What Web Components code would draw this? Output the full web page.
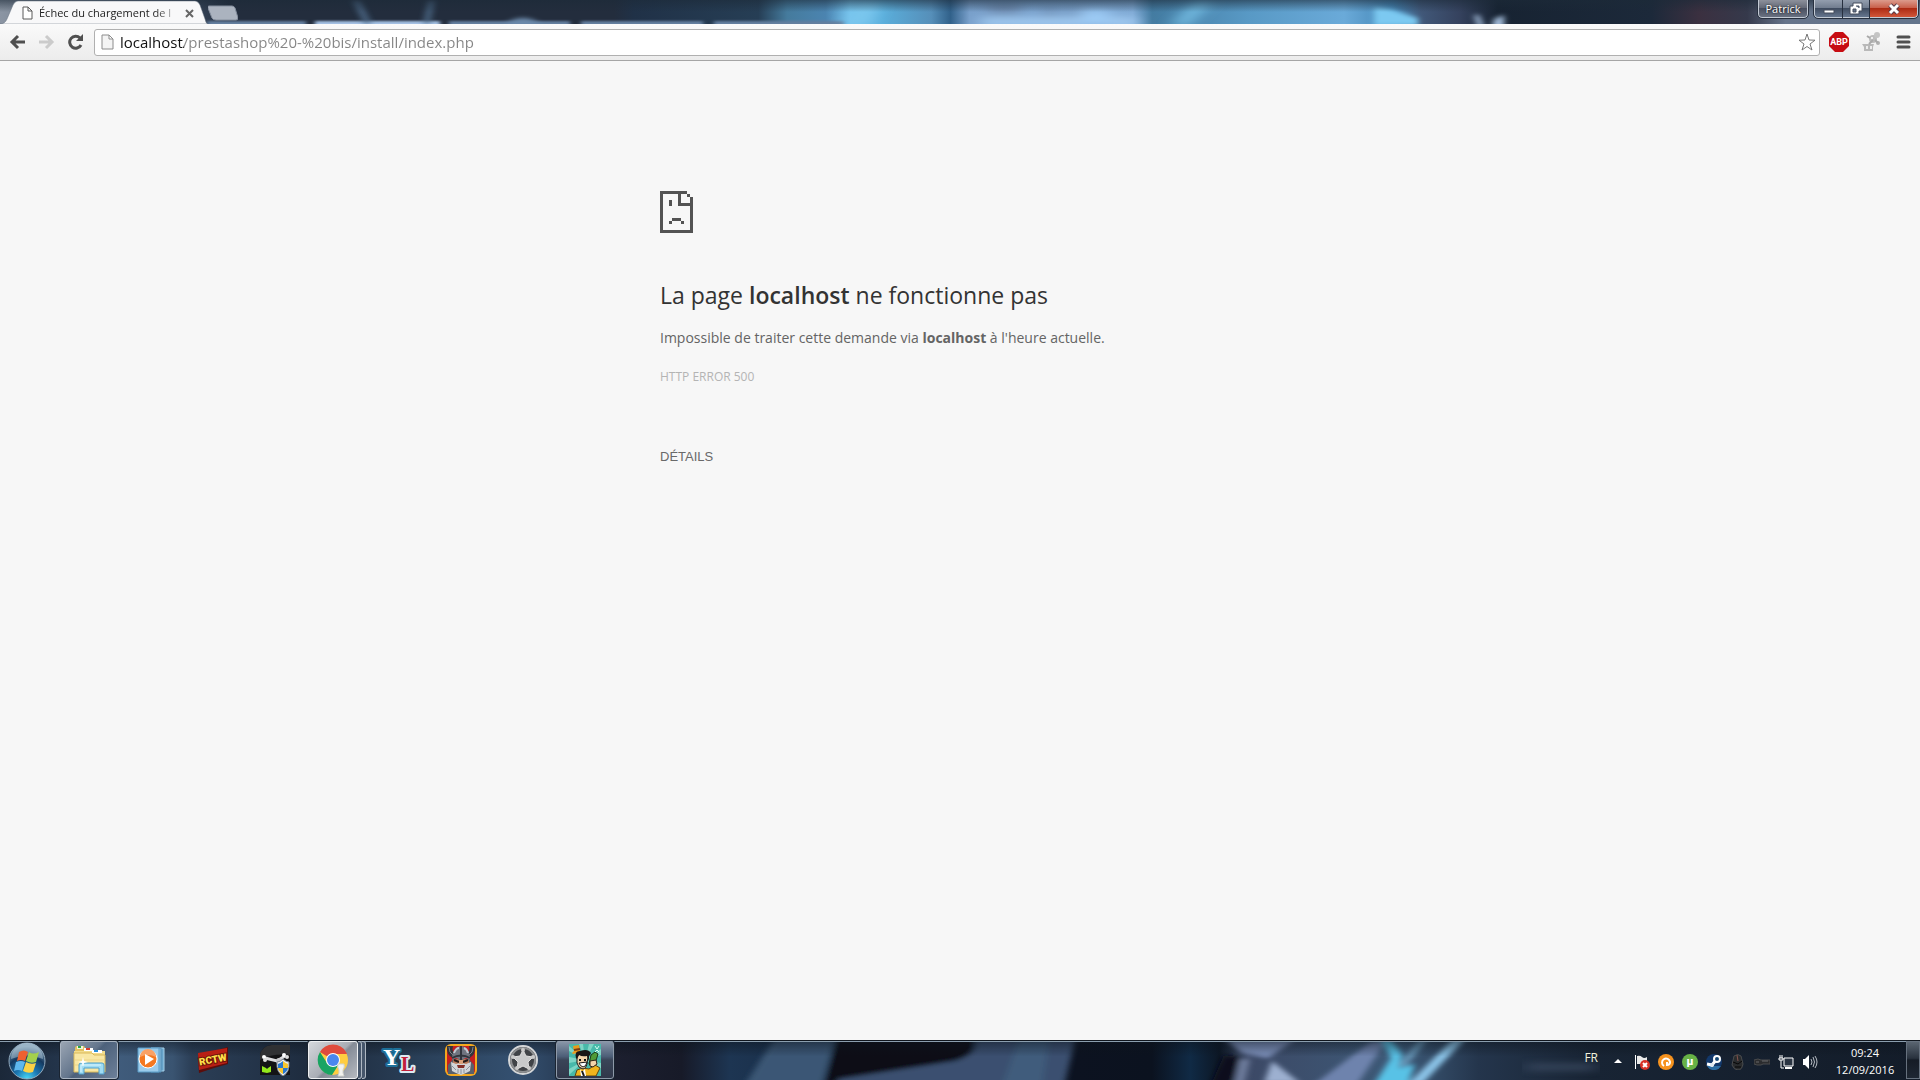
<!DOCTYPE html>
<html lang="fr">
<head>
<meta charset="utf-8">
<title>Échec du chargement de la page</title>
<style>
  html, body {
    height: 100%;
    margin: 0;
  }
  body {
    display: flex;
    flex-direction: column;
    overflow: hidden;
    background: #f7f7f7;
    font-family: "Open Sans", "Noto Sans", sans-serif;
  }
  error-page {
    flex: 1;
  }
  error-page [slot=title] b {
    font-weight: 600;
  }
</style>
</head>
<body>
  <title-bar>
    <browser-tab>Échec du chargement de l</browser-tab>
    <window-controls slot="controls" user="Patrick"></window-controls>
  </title-bar>
  <tool-bar url="localhost/prestashop%20-%20bis/install/index.php"></tool-bar>

  <error-page code="HTTP ERROR 500">
    <span slot="title">La page <b>localhost</b> ne fonctionne pas</span>
    <span slot="summary">Impossible de traiter cette demande via <b>localhost</b> à l'heure actuelle.</span>
  </error-page>

  <task-bar>
    <task-button label="Explorateur Windows" state="open">
      <svg width="34" height="32" viewBox="0 0 34 32">
        <path d="M3 4l1-2h8l1 2h8v3h9v20H3z" fill="#e3c263"/>
        <path d="M5 2h6v3H5z" fill="#f4f4dc"/><path d="M6 2h3v2H6z" fill="#28a745"/>
        <path d="M2 7h31v20H2z" fill="#f2dc8c"/>
        <path d="M12 4h9v3h-9z" fill="#fff"/><path d="M14 4h4v2h-4z" fill="#d83c2e"/>
        <path d="M20 6h10v3H20z" fill="#fff"/><path d="M22 6h4v2h-4z" fill="#2a8fd8"/>
        <path d="M2 9h18l2 2h11v17H2z" fill="#f8e7a4" stroke="#d9b95b"/>
        <path d="M3 16h30M3 21h30" stroke="#edd587"/>
        <path d="M7 30V21q0-2 2-2h21q2 0 2 2v9h-5v-6H12v6z" fill="#9fdcf3" stroke="#4f9fcb"/>
        <path d="M9 28v-7h20" fill="none" stroke="#dcf6ff"/>
        <path d="M11 13l1 4 4 1-4 1-1 4-1-4-4-1 4-1z" fill="#fff"/>
      </svg>
    </task-button>
    <task-button label="Lecteur Windows Media">
      <svg width="28" height="28" viewBox="0 0 28 28">
        <path d="M14 2h13v23H14z" fill="#66a2c9" stroke="#a6d0e8"/>
        <path d="M14 2h10v24H14z" fill="#8cbdde" stroke="#5790b8"/>
        <path d="M1 2h21v24H1z" fill="#9bcbea" stroke="#589bc6"/>
        <circle cx="11" cy="13" r="9" fill="#f47820" stroke="#fff"/>
        <path d="M3 11a8 8 0 0 1 16 0q-8-4-16 0z" fill="#f9a165"/>
        <path d="M8 8v11l9-6z" fill="#fff"/>
      </svg>
    </task-button>
    <task-button label="RollerCoaster Tycoon World">
      <svg width="36" height="34" viewBox="-2 -3 36 34">
        <path d="M1 9L16 5 31 1v17l-14 4-15 5z" fill="#5c0d0b"/>
        <path d="M1 7L30 2v15L2 24z" fill="#b81f14"/>
        <text x="16" y="17" fill="#ffe04a" stroke="#6d140a" stroke-width="2" paint-order="stroke" text-anchor="middle" transform="rotate(-11 16 14)" font-family="Roboto" font-size="10" font-weight="900">RCTW</text>
      </svg>
    </task-button>
    <task-button label="Utilitaire">
      <svg width="32" height="32" viewBox="0 0 32 32">
        <path d="M1 31V12Q2 2 13 1h18v30z" fill="#131315"/>
        <path d="M1 16V12Q2 2 13 1h18v10Q14 9 1 16z" fill="#303133"/>
        <path d="M6 14l12 3 8-5" fill="none" stroke="#dcdcde" stroke-width="3"/>
        <circle cx="5" cy="13" r="2" fill="#fff"/><circle cx="6" cy="16" r="2" fill="#ddd"/>
        <circle cx="20" cy="17" r="3" fill="#c9c9cc"/>
        <circle cx="25" cy="11" r="2" fill="#fff"/><circle cx="28" cy="13" r="2" fill="#ddd"/>
        <path d="M3 22l4 2 1 1 1-1 3-2v6l-4 1-5-1z" fill="#92e81c"/>
        <path d="M24 15q3 3 6 3 1 10-6 14-7-4-6-14 3 0 6-3z" fill="#e9edf2" stroke="#7c8590"/>
        <path d="M24 17v7h-5q0-3 0-4 3-1 5-3zM24 24h5q-1 4-5 6z" fill="#2877ce"/>
        <path d="M24 17q2 2 5 3v4h-5zM19 24h5v6q-4-2-5-6z" fill="#f8c62d"/>
      </svg>
    </task-button>
    <task-button label="Google Chrome" state="active">
      <svg width="32" height="34" viewBox="0 0 32 34">
        <circle cx="16" cy="17" r="15" fill="#ffcd40"/>
        <path d="M16 17L3 9A15 15 0 0 1 29 9l1 2H16z" fill="#df4b3d"/>
        <path d="M3 9a15 15 0 0 0 12 23l7-11-6 2-6-3z" fill="#19a463"/>
        <circle cx="16" cy="17" r="7" fill="#fff"/><circle cx="16" cy="17" r="6" fill="#4a87ee"/>
        <path d="M21 21h6q1 3-1 6v3l1 3h-6l1-3v-3q-2-3-1-6z" fill="#f3f3ef" stroke="#d0d2cc"/>
      </svg>
    </task-button>
    <task-button label="YL">
      <svg width="36" height="36" viewBox="0 0 36 36">
        <g font-family="Liberation Serif" font-weight="700" stroke-width="4" paint-order="stroke" stroke-linejoin="round">
          <text x="2" y="23" font-size="24" fill="#fff" stroke="#1d6f98">Y</text>
          <text x="20" y="29" font-size="20" fill="#c2203a" stroke="#dcebf2">L</text>
        </g>
      </svg>
    </task-button>
    <task-button label="Vikings">
      <svg width="34" height="34" viewBox="0 0 34 34">
        <rect x="1" y="1" width="32" height="32" rx="6" fill="#f3a81e"/>
        <rect x="3" y="3" width="28" height="28" rx="4" fill="#c51d20"/>
        <path d="M4 31v-9l5-6h16l5 6v9z" fill="#59606b"/>
        <path d="M3 3q-1 9 6 12l4-3Q7 9 9 3zM31 3q1 9-6 12l-4-3q6-3 4-9z" fill="#33353c"/>
        <path d="M5 4q0 6 4 8M29 4q0 6-4 8" fill="none" stroke="#7d828c"/>
        <path d="M8 17Q8 4 17 3q9 1 9 14l-4-2-5 2-5-2z" fill="#6f747f"/>
        <path d="M17 3v14M8 15q9-5 18 0" fill="none" stroke="#30343c" stroke-width="2"/>
        <path d="M10 10q2-5 5-5M20 5q3 1 4 5" fill="none" stroke="#c2c8d0" stroke-width="2"/>
        <path d="M9 17l5-1 3 2 3-2 5 1v5H9z" fill="#b97c5c"/>
        <path d="M10 17l5 2M24 17l-5 2" stroke="#241a18" stroke-width="2"/>
        <path d="M7 19l5 2 4-1h2l4 1 5-2-1 9-4 2-5 2-5-2-4-2z" fill="#d2d5d9"/>
        <path d="M13 22h8l-1 3h-6z" fill="#832f28"/>
        <path d="M8 23l4 4M26 23l-4 4M14 26v4M17 26v5M20 26v4" stroke="#8d9299"/>
        <path d="M15 17h4v4h-4z" fill="#daa07a"/>
      </svg>
    </task-button>
    <task-button label="Étoile">
      <svg width="32" height="32" viewBox="0 0 32 32">
        <circle cx="16" cy="16" r="14" fill="#404347" stroke="#d4d6d8" stroke-width="2"/>
        <circle cx="16" cy="16" r="12" fill="none" stroke="#8d8f91" stroke-width="2"/>
        <path d="M16 6l3 6 7 1-5 5 1 7-6-3-6 3 1-7-5-5 7-1z" fill="#c8c9ca" stroke="#dedede"/>
        <g fill="#cacaca"><circle cx="16" cy="6" r="2"/><circle cx="26" cy="13" r="2"/><circle cx="22" cy="24" r="2"/><circle cx="10" cy="24" r="2"/><circle cx="6" cy="13" r="2"/></g>
      </svg>
    </task-button>
    <task-button label="AdVenture Capitalist" state="dim">
      <svg width="32" height="32" viewBox="0 0 32 32">
        <path d="M0 0h32v32H0z" fill="#48b9aa"/>
        <path d="M16 16L0 2v5zM16 16L10 0h4zM16 16L20 0h5zM16 16L32 5v6zM16 16l16 3v6zM16 16L0 13v6zM16 16L0 25v6z" fill="#7ed5c5"/>
        <path d="M4 2l6-1 1 6 2 1-9 2-1-1 2-2z" fill="#e89b1c"/><path d="M5 6l6-1" stroke="#7b3c12" stroke-width="2"/>
        <path d="M6 32l2-6 6-2 6 1 6-4 5 3-4 8z" fill="#f0b41d" stroke="#5f4310"/>
        <path d="M8 12q5-5 11 0l-1 8q-1 5-4 5-5-1-6-6z" fill="#f3d4ab" stroke="#1c1b1b"/>
        <path d="M7 14Q5 7 11 7q8-3 11 2-1 3-2 3v5l-2-5q-5 1-8-1l-2 4z" fill="#191717"/>
        <path d="M10 19l8-1q-1 5-4 5-3-1-4-4z" fill="#fff" stroke="#151515"/>
        <path d="M11 25l2 3 3-3 1 7h-5z" fill="#fff"/><path d="M13 27l2 5" stroke="#1a1a1a" stroke-width="2"/>
        <path d="M11 15v2M16 15v2" stroke="#111" stroke-width="2"/>
        <path d="M22 11l4-3 3 2-3 10-4 2-2-2z" fill="#4f9b37" stroke="#173819"/>
        <path d="M21 17l6-1 1 4-4 3-3-1z" fill="#f3d4ab" stroke="#312117"/>
        <path d="M26 2l2 3 2-3M26 8l2-2 2 2" stroke="#d6fff3" fill="none"/>
      </svg>
    </task-button>
    <system-tray slot="tray" lang="FR" time="09:24" date="12/09/2016"></system-tray>
  </task-bar>

<script>
class TitleBar extends HTMLElement {
  constructor() {
    super()
    this.attachShadow({ mode: 'open' })
    this.shadowRoot.innerHTML = `
      <style>
        :host {
          display: flex;
          position: relative;
          justify-content: space-between;
          align-items: flex-start;
          height: 24px;
          overflow: hidden;
          background: #232f40;
        }
        .glass {
          position: absolute;
          inset: 0;
          width: 100%;
          height: 100%;
        }
        .tabs {
          display: flex;
          position: relative;
        }
        .new {
          width: 30px;
          height: 24px;
          padding: 0;
          border: 0;
          background: none;
        }
        .new svg {
          display: block;
        }
        ::slotted([slot=controls]) {
          position: relative;
        }
      </style>
      <svg class="glass" viewBox="0 0 1920 24" preserveAspectRatio="none" aria-hidden="true">
        <defs>
          <filter id="soft" x="-10%" y="-80%" width="120%" height="260%"><feGaussianBlur stdDeviation="8 4"/></filter>
          <filter id="fine" x="-10%" y="-50%" width="120%" height="200%"><feGaussianBlur stdDeviation="2 1"/></filter>
          <filter id="glow" x="-10%" y="-50%" width="120%" height="200%"><feGaussianBlur stdDeviation="3 2"/></filter>
          <linearGradient id="sky">
            <stop offset="0" stop-color="#8b95a3"/><stop offset=".1" stop-color="#38475b"/>
            <stop offset=".12" stop-color="#232d3d"/><stop offset=".32" stop-color="#232d3d"/>
            <stop offset=".33" stop-color="#203147"/><stop offset=".395" stop-color="#263e55"/>
            <stop offset=".41" stop-color="#457b9d"/><stop offset=".43" stop-color="#4b84b0"/>
            <stop offset=".443" stop-color="#72c0eb"/><stop offset=".46" stop-color="#5aaedb"/>
            <stop offset=".485" stop-color="#568fb9"/><stop offset=".495" stop-color="#31618a"/>
            <stop offset=".505" stop-color="#789fca"/><stop offset=".59" stop-color="#7fa9d4"/>
            <stop offset=".6" stop-color="#437ba1"/><stop offset=".65" stop-color="#5899c5"/>
            <stop offset=".7" stop-color="#6aaad9"/><stop offset=".725" stop-color="#4486b6"/>
            <stop offset=".74" stop-color="#415879"/><stop offset=".76" stop-color="#35425e"/>
            <stop offset=".78" stop-color="#172332"/><stop offset=".86" stop-color="#1c293a"/>
            <stop offset=".885" stop-color="#3b3040"/><stop offset=".91" stop-color="#35394b"/>
            <stop offset=".93" stop-color="#67758b"/><stop offset="1" stop-color="#64758c"/>
          </linearGradient>
          <linearGradient id="edge" x2="0" y2="1">
            <stop offset="0" stop-color="#1c2a38" stop-opacity=".6"/><stop offset=".5" stop-color="#1c2a38" stop-opacity="0"/>
          </linearGradient>
        </defs>
        <path d="M0 0h1920v24H0z" fill="url(#sky)"/>
        <g filter="url(#fine)">
          <path d="M207 21h99v5h-99zM449 21h121v5H449zM581 21h122v5H581zM714 21h130v5H714z" fill="#647e9e"/>
          <path d="M315 21h125v5H315z" fill="#a3bfe2"/>
        </g>
        <g filter="url(#glow)">
          <path d="M352 0h8l12 24h-8zM428 0h7l-5 24h-7z" fill="#4d6a89" opacity=".8"/>
          <path d="M505 24q18-12 36 0z" fill="#6f8fb1"/>
          <path d="M1374 7l16 2 28 9v8h-44z" fill="#7cc9f1"/>
          <path d="M1474 15h5l5 12h-6zM1494 19l10-4v13h-12z" fill="#a4bddb"/>
        </g>
        <g filter="url(#soft)">
          <path d="M856 0h26l-12 26h-26zM1196 0h18l-26 26h-18z" fill="#7ecaf0" opacity=".8"/>
          <path d="M980 18h158v8H980z" fill="#a8d2f8"/>
          <path d="M988 4h32v10h-32zM1044 8h12v8h-12zM1070 8h12v8h-12z" fill="#6a86aa"/>
          <path d="M1080 10h30v14h-30z" fill="#9ccbf5"/>
        </g>
        <path d="M0 0h1920v24H0z" fill="url(#edge)"/>
      </svg>
      <div class="tabs">
        <slot></slot>
        <button class="new" aria-label="Nouvel onglet">
          <svg width="30" height="24" viewBox="0 0 30 24">
            <path d="M1 6h23q2 0 3 2l3 10q0 2-2 2H8q-3 0-4-2L0 8q-1-2 1-2z" fill="#abb3bf" stroke="#848e9d"/>
          </svg>
        </button>
      </div>
      <slot name="controls"></slot>
    `
  }
}

class BrowserTab extends HTMLElement {
  constructor() {
    super()
    this.attachShadow({ mode: 'open' })
    this.shadowRoot.innerHTML = `
      <style>
        :host {
          display: flex;
          position: relative;
          box-sizing: border-box;
          align-items: center;
          width: 208px;
          height: 24px;
          padding: 2px 12px 0 22px;
          color: #222;
          font-size: 11px;
          line-height: 20px;
        }
        .shape {
          position: absolute;
          inset: 0;
        }
        .icon {
          position: relative;
          flex: none;
          margin-right: 6px;
        }
        .title {
          position: relative;
          flex: 1;
          overflow: hidden;
          white-space: nowrap;
          -webkit-mask-image: linear-gradient(90deg, #000 116px, transparent 142px);
          mask-image: linear-gradient(90deg, #000 116px, transparent 142px);
        }
        button {
          position: relative;
          display: flex;
          align-items: center;
          padding: 2px;
          border: 0;
          background: none;
        }
      </style>
      <svg class="shape" width="208" height="24" viewBox="0 0 208 24" aria-hidden="true">
        <path d="M0 24q5 0 7-5l6-14q2-4 5-4h177q3 0 5 4l5 14q1 5 3 5z" fill="#f8f8f9" stroke="#66717f" stroke-opacity=".5"/>
      </svg>
      <svg class="icon" width="11" height="14" viewBox="0 0 11 14" aria-hidden="true">
        <path d="M1 1h5l4 4v8H1zM6 1v4h4" fill="#fff" stroke="#5b5b5b"/>
      </svg>
      <span class="title"><slot></slot></span>
      <button aria-label="Fermer l'onglet">
        <svg width="9" height="9" viewBox="0 0 9 9"><path d="M1 1l7 7M8 1L1 8" stroke="#666" stroke-width="2"/></svg>
      </button>
    `
  }
}

class WindowControls extends HTMLElement {
  constructor() {
    super()
    this.attachShadow({ mode: 'open' })
    this.shadowRoot.innerHTML = `
      <style>
        :host {
          display: flex;
          gap: 6px;
          padding-right: 2px;
        }
        button {
          display: flex;
          box-sizing: border-box;
          justify-content: center;
          align-items: center;
          height: 18px;
          padding: 0;
          border: 1px solid #c3cad4;
          border-top: 0;
          outline: 1px solid #27303f;
          background: linear-gradient(#939eae, #727e90 45%, #3f4c60 50%, #66768e);
          color: #fff;
          font: 11px/16px "Open Sans", sans-serif;
        }
        .user {
          width: 50px;
          border-radius: 0 0 4px 4px;
          background: linear-gradient(#8c909b, #666b78 45%, #4a5060 50%, #697181);
          text-shadow: 0 0 2px #000;
        }
        .group {
          display: flex;
        }
        .min {
          width: 29px;
          border-radius: 0 0 0 4px;
        }
        .max {
          width: 27px;
          border-left: 0;
        }
        .close {
          width: 48px;
          border-left: 0;
          border-radius: 0 0 4px 0;
          background: linear-gradient(#dc9b8d, #c9604c 45%, #ad2b14 50%, #d1563a);
        }
      </style>
      <button class="user"></button>
      <div class="group">
        <button class="min" aria-label="Réduire">
          <svg width="12" height="14" viewBox="0 0 12 14"><path d="M1 8h10v3H1z" fill="#fff" stroke="#444c5c"/></svg>
        </button>
        <button class="max" aria-label="Restaurer">
          <svg width="14" height="14" viewBox="0 0 14 14">
            <path d="M4 1h9v8h-3v3H1V4h3z" fill="#fff" stroke="#444c5c"/><path d="M4 7h3v3H4zM7 4h3v2" fill="#66758b" stroke="#444c5c"/>
          </svg>
        </button>
        <button class="close" aria-label="Fermer">
          <svg width="14" height="14" viewBox="0 0 14 14">
            <path d="M3 3l8 8M11 3l-8 8" stroke="#5a3c48" stroke-width="5"/><path d="M3 3l8 8M11 3l-8 8" stroke="#fff" stroke-width="3"/>
          </svg>
        </button>
      </div>
    `
  }

  connectedCallback() {
    this.shadowRoot.querySelector('.user').textContent = this.getAttribute('user')
  }
}

class ToolBar extends HTMLElement {
  constructor() {
    super()
    this.attachShadow({ mode: 'open' })
    this.shadowRoot.innerHTML = `
      <style>
        :host {
          display: flex;
          box-sizing: border-box;
          align-items: center;
          height: 37px;
          padding: 0 7px 0 3px;
          border-bottom: 1px solid #a5a5a5;
          background: linear-gradient(#fafafa, #ececec);
        }
        button {
          display: flex;
          flex: none;
          justify-content: center;
          align-items: center;
          padding: 0;
          border: 0;
          background: none;
        }
        .nav {
          width: 29px;
          height: 28px;
        }
        .box {
          display: flex;
          flex: 1;
          box-sizing: border-box;
          align-items: center;
          gap: 6px;
          height: 27px;
          margin-left: 4px;
          padding: 0 3px 0 6px;
          border: 1px solid #b0b0b0;
          border-radius: 3px;
          background: #fff;
        }
        input {
          flex: 1;
          min-width: 0;
          height: 24px;
          padding: 0;
          border: 0;
          outline: 0;
          background: linear-gradient(90deg, #111 64px, #858585 64px);
          -webkit-background-clip: text;
          background-clip: text;
          -webkit-text-fill-color: transparent;
          font: 15px/24px "Open Sans", sans-serif;
        }
        .extensions {
          display: flex;
          gap: 12px;
          align-items: center;
          padding-left: 9px;
        }
      </style>
      <button class="nav" aria-label="Précédent">
        <svg width="17" height="16" viewBox="0 0 17 16"><path d="M9 2L3 8l6 6M3 8h13" fill="none" stroke="#4f4f4f" stroke-width="3"/></svg>
      </button>
      <button class="nav" aria-label="Suivant">
        <svg width="17" height="16" viewBox="0 0 17 16"><path d="M8 2l6 6-6 6M14 8H1" fill="none" stroke="#cbcbcb" stroke-width="3"/></svg>
      </button>
      <button class="nav" aria-label="Actualiser">
        <svg width="16" height="16" viewBox="0 0 16 16">
          <path d="M13 11a6 6 0 1 1-1-7" fill="none" stroke="#505050" stroke-width="3"/><path d="M15 0v7H8z" fill="#505050"/>
        </svg>
      </button>
      <div class="box">
        <svg width="13" height="16" viewBox="0 0 13 16" aria-hidden="true">
          <path d="M1 1h7l4 4v10H1zM8 1v4h4" fill="#f4f4f4" stroke="#8c8c8c"/>
        </svg>
        <input type="text" aria-label="Adresse" spellcheck="false">
        <button aria-label="Ajouter aux favoris">
          <svg width="18" height="18" viewBox="0 0 18 18">
            <path d="M9 1l2 6 6 .2-5 3.800 2 6L9 13.500 4 17l2-6L1 7.200 7 7z" fill="#fff" stroke="#777" stroke-linejoin="round"/>
          </svg>
        </button>
      </div>
      <div class="extensions">
        <button aria-label="Adblock Plus">
          <svg width="20" height="20" viewBox="0 0 20 20">
            <path d="M6 0h8l6 6v8l-6 6H6l-6-6V6z" fill="#c70d12"/>
            <text x="10" y="13" fill="#fff" text-anchor="middle" font-family="Roboto" font-size="9" font-weight="700">ABP</text>
          </svg>
        </button>
        <button aria-label="Extension">
          <svg width="20" height="20" viewBox="0 0 20 20">
            <path d="M1 12h12l-1 3v4H3v-4z" fill="#b9b9b9"/><path d="M5 14h2v3H5zM9 14h2v3H9z" fill="#eee"/>
            <circle cx="12" cy="7" r="4" fill="#bdbdbd"/><circle cx="16" cy="3" r="3" fill="#c4c4c4"/><circle cx="17" cy="11" r="2" fill="#b2b2b2"/>
            <path d="M6 4l3 2M8 12l4-4M14 8l3 3" stroke="#aaa" stroke-width="2"/><circle cx="11" cy="6" r="1" fill="#fff"/>
          </svg>
        </button>
        <button aria-label="Menu">
          <svg width="20" height="16" viewBox="0 0 20 16"><path d="M5 3h11M5 8h11M5 13h11" stroke="#505050" stroke-width="3" stroke-linecap="round"/></svg>
        </button>
      </div>
    `
  }

  connectedCallback() {
    this.shadowRoot.querySelector('input').value = this.getAttribute('url')
  }
}

class ErrorPage extends HTMLElement {
  constructor() {
    super()
    this.attachShadow({ mode: 'open' })
    this.shadowRoot.innerHTML = `
      <style>
        :host {
          display: block;
          background: #f7f7f7;
          color: #646464;
          font-size: 14px;
          line-height: 24px;
        }
        main {
          max-width: 600px;
          margin: 0 auto;
          padding-top: 130px;
        }
        svg {
          display: block;
        }
        h1 {
          margin: 46px 0 15px;
          color: #333;
          font-size: 23px;
          font-weight: 400;
          line-height: 32px;
        }
        p {
          margin: 0;
        }
        .code {
          margin-top: 15px;
          color: #b4b4b4;
          font-size: 12px;
        }
        button {
          margin-top: 56px;
          padding: 0;
          border: 0;
          background: none;
          color: #696969;
          font: 13px/24px "Liberation Sans", sans-serif;
          text-transform: uppercase;
        }
        ::slotted(span) {
          white-space: nowrap;
        }
      </style>
      <main>
        <svg width="33" height="42" viewBox="0 0 11 14" shape-rendering="crispEdges" aria-hidden="true">
          <path fill="#535353" d="M0 0h9v1h1v1H9V1H7v3h3V2h1v12H0zM1 1v12h9V5H6V1zM3 3h1v2H3zM4 9h3v1H4zM3 10h1v1H3zM7 10h1v1H7z" fill-rule="evenodd"/>
        </svg>
        <h1><slot name="title"></slot></h1>
        <p><slot name="summary"></slot></p>
        <p class="code"></p>
        <button>Détails</button>
      </main>
    `
  }

  connectedCallback() {
    this.shadowRoot.querySelector('.code').textContent = this.getAttribute('code')
  }
}

class TaskBar extends HTMLElement {
  constructor() {
    super()
    this.attachShadow({ mode: 'open' })
    this.shadowRoot.innerHTML = `
      <style>
        :host {
          display: flex;
          position: relative;
          box-sizing: border-box;
          height: 40px;
          border-top: 1px solid #10161e;
          background: #1b2636;
        }
        .glass {
          position: absolute;
          inset: 0;
          width: 100%;
          height: 100%;
        }
        .start {
          position: relative;
          width: 60px;
          padding: 0 0 0 8px;
          border: 0;
          background: none;
          text-align: left;
        }
        .start svg {
          display: block;
        }
        .buttons {
          display: flex;
          position: relative;
          flex: 1;
          gap: 4px;
          padding-bottom: 1px;
        }
        ::slotted([slot=tray]) {
          position: relative;
        }
      </style>
      <svg class="glass" viewBox="0 0 1920 39" preserveAspectRatio="none" aria-hidden="true">
        <defs>
          <filter id="blur" x="-5%" y="-20%" width="110%" height="140%"><feGaussianBlur stdDeviation="3 2"/></filter>
          <filter id="haze" x="-5%" y="-80%" width="110%" height="260%"><feGaussianBlur stdDeviation="8 3"/></filter>
          <linearGradient id="base">
            <stop offset="0" stop-color="#1b2839"/><stop offset=".03" stop-color="#23344a"/>
            <stop offset=".06" stop-color="#405c7c"/><stop offset=".09" stop-color="#3a5471"/>
            <stop offset=".1" stop-color="#2b3e56"/><stop offset=".16" stop-color="#1e2c3f"/>
            <stop offset=".19" stop-color="#233449"/><stop offset=".22" stop-color="#2a4059"/>
            <stop offset=".27" stop-color="#345070"/><stop offset=".3" stop-color="#263850"/>
            <stop offset=".32" stop-color="#1c1f2f"/><stop offset=".355" stop-color="#171a28"/>
            <stop offset=".38" stop-color="#1d3552"/><stop offset=".56" stop-color="#0c1220"/>
            <stop offset=".6" stop-color="#0b121f"/><stop offset=".62" stop-color="#102a45"/>
            <stop offset=".635" stop-color="#0c1725"/><stop offset=".65" stop-color="#3c4966"/>
            <stop offset=".73" stop-color="#3d5a78"/><stop offset=".77" stop-color="#24354c"/>
            <stop offset=".83" stop-color="#182434"/><stop offset="1" stop-color="#131c29"/>
          </linearGradient>
          <linearGradient id="shine" x2="0" y2="1">
            <stop offset="0" stop-color="#0d141c" stop-opacity=".5"/><stop offset=".4" stop-color="#0d141c" stop-opacity="0"/>
          </linearGradient>
        </defs>
        <path d="M0 0h1920v39H0z" fill="url(#base)"/>
        <g filter="url(#blur)">
          <path d="M776-5h60l-14 50h-78z" fill="#3b5674"/>
          <path d="M837-5h136v16q-4 6-21 9L835 42l-11 3z" fill="#090d14"/>
          <path d="M975-5h101l-12 50H838v-7l117-18q19-6 20-15z" fill="#3a506f"/>
          <path d="M1020-5h30l-8 50h-40z" fill="#3f5c7b"/>
          <path d="M1222-5h78l-32 22-26-5z" fill="#7d90ba"/>
          <path d="M1272 20l28 22h-36z" fill="#9db0d0"/>
          <path d="M1224 14l16 2-10 30h-20z" fill="#0b111c"/>
          <path d="M1240 18h10l-6 26h-10z" fill="#6e7d9d"/>
          <path d="M1372 0h14l-30 45h-44z" fill="#6e83ad"/>
          <path d="M1380-3h10l12 16-3 14 16-4-8 22h-34l18-28z" fill="#59c2e6"/>
          <path d="M1422-5h8l-24 30h-8z" fill="#7ab3d6" opacity=".7"/>
          <path d="M1456-5h12l-46 48h-14z" fill="#8bc4e8"/>
        </g>
        <path d="M1526 22h70v8h-70z" fill="#415067" opacity=".6" filter="url(#haze)"/>
        <path d="M0 0h1920v39H0z" fill="url(#shine)"/>
        <path d="M0 0h1920v1H0z" fill="#8b9eae"/>
      </svg>
      <button class="start" aria-label="Démarrer">
        <svg width="38" height="38" viewBox="0 0 38 38">
          <defs>
            <radialGradient id="orb" cx=".5" cy="1" r=".9">
              <stop offset="0" stop-color="#4cdcf8"/><stop offset=".35" stop-color="#1b79b4"/><stop offset=".7" stop-color="#15395f"/><stop offset="1" stop-color="#7896ac"/>
            </radialGradient>
          </defs>
          <circle cx="19" cy="19" r="18" fill="url(#orb)" stroke="#92aabd"/>
          <path d="M3 17a16 16 0 0 1 32 0q-16-7-32 0z" fill="#cfe4f0" opacity=".4"/>
          <path d="M11 10q5-3 9 0l-3 9q-4-2-8 0z" fill="#ee6130"/>
          <path d="M21 10q4 3 10 0l-3 10q-5 2-10-1z" fill="#a4d04b"/>
          <path d="M8 20q5-2 9 0l-3 9q-4-2-8 0z" fill="#5eb7ed"/>
          <path d="M18 20q5 3 10 1l-3 9q-5 2-10-1z" fill="#fbd245"/>
        </svg>
      </button>
      <div class="buttons"><slot></slot></div>
      <slot name="tray"></slot>
    `
  }
}

class TaskButton extends HTMLElement {
  constructor() {
    super()
    this.attachShadow({ mode: 'open' })
    this.shadowRoot.innerHTML = `
      <style>
        :host {
          display: flex;
          width: 58px;
        }
        button {
          display: flex;
          flex: 1;
          box-sizing: border-box;
          justify-content: center;
          align-items: center;
          min-width: 0;
          padding: 0;
          border: 1px solid transparent;
          border-radius: 3px;
          background: none;
        }
        :host([state]) button {
          border-color: #a9b4c1;
          background: linear-gradient(135deg, #9aa5b3, #63758c 45%, #4d617b 50%, #6d8099);
          box-shadow: 0 0 0 1px #1a2431;
        }
        :host([state=dim]) button {
          border-color: #8e99a8;
          background: linear-gradient(#8795a7, #4d5f78 40%, #3a4558 50%, #31374a);
        }
        :host([state=active]) button {
          border-color: #eef0f2;
          background: linear-gradient(135deg, #d5d8dc, #a9adb5 50%, #858c97 55%, #b6bac0);
        }
        /* edges of the windows stacked behind the front one */
        .stack {
          display: none;
          width: 3px;
          border: 1px solid #aeb7c2;
          border-left: 0;
          border-radius: 0 3px 3px 0;
          background: #46566b;
        }
        :host([state=active]) .stack {
          display: block;
        }
      </style>
      <button><slot></slot></button>
      <span class="stack"></span>
      <span class="stack"></span>
    `
  }

  connectedCallback() {
    this.shadowRoot.querySelector('button').setAttribute('aria-label', this.getAttribute('label'))
  }
}

class SystemTray extends HTMLElement {
  constructor() {
    super()
    this.attachShadow({ mode: 'open' })
    this.shadowRoot.innerHTML = `
      <style>
        :host {
          display: flex;
          align-items: center;
          color: #fff;
          font-size: 12px;
          line-height: 17px;
        }
        button {
          display: flex;
          padding: 0;
          border: 0;
          background: none;
        }
        .lang {
          margin: 0 16px 6px 0;
          color: #f1f3dc;
        }
        .icons {
          display: flex;
          gap: 8px;
          margin: 2px 6px 0 12px;
        }
        .clock {
          width: 82px;
          font-size: 11px;
          text-align: center;
        }
        .desktop {
          box-sizing: border-box;
          align-self: stretch;
          width: 14px;
          margin-bottom: 1px;
          border: 1px solid #66717e;
          background: linear-gradient(#5a6571, #29323e 45%, #151c26 50%, #1e2733);
        }
      </style>
      <span class="lang"></span>
      <button aria-label="Afficher les icônes cachées">
        <svg width="8" height="8" viewBox="0 0 8 8"><path d="M0 6l4-4 4 4z" fill="#fff"/></svg>
      </button>
      <div class="icons">
        <button aria-label="Centre de maintenance">
          <svg width="16" height="16" viewBox="0 0 16 16">
            <path d="M1 1h1v14H1z" fill="#fff"/><path d="M3 2q3-1 5 1t5 0v7H3z" fill="#e9e9e9"/>
            <circle cx="11" cy="11" r="5" fill="#d83127"/><path d="M9 9l4 4M13 9l-4 4" stroke="#fff" stroke-width="2"/>
          </svg>
        </button>
        <button aria-label="Avast">
          <svg width="16" height="16" viewBox="0 0 16 16">
            <circle cx="8" cy="8" r="8" fill="#f7931e"/><path d="M6 12a4 4 0 1 1 6-4q0 3-3 3V8" fill="none" stroke="#fff" stroke-width="2"/>
          </svg>
        </button>
        <button aria-label="µTorrent">
          <svg width="16" height="16" viewBox="0 0 16 16">
            <circle cx="8" cy="8" r="8" fill="#67b246"/>
            <text x="8" y="11" fill="#fff" text-anchor="middle" font-family="Roboto" font-size="11" font-weight="900">µ</text>
          </svg>
        </button>
        <button aria-label="Steam">
          <svg width="16" height="16" viewBox="0 0 16 16">
            <circle cx="8" cy="8" r="8" fill="#12386b"/><path d="M1 12a8 8 0 0 0 14 0z" fill="#2c6da3"/>
            <path d="M1 10l5 1 4-5" fill="none" stroke="#fff" stroke-width="3"/>
            <circle cx="11" cy="5" r="3" fill="#164875" stroke="#fff" stroke-width="2"/><circle cx="6" cy="11" r="2" fill="#dfe8f0"/>
          </svg>
        </button>
        <button aria-label="Souris">
          <svg width="16" height="16" viewBox="0 0 16 16">
            <path d="M4 2q4-3 7 0l2 8q-1 6-5 6t-6-5z" fill="#292b2d" stroke="#4a4c4e"/><path d="M7 1l1 6" stroke="#84554f"/><path d="M3 8l5 2 4-3M5 13h6" stroke="#070707" fill="none"/>
          </svg>
        </button>
        <button aria-label="Périphérique">
          <svg width="16" height="16" viewBox="0 0 16 16">
            <path d="M0 6l4-1 3 1h9v4h-7l-2 1H3l-3-1z" fill="#2b2c2e" stroke="#4a4b4d"/><path d="M2 8h3M8 7h6" stroke="#68686a"/>
          </svg>
        </button>
        <button aria-label="Réseau">
          <svg width="16" height="16" viewBox="0 0 16 16">
            <path d="M6 4h9v8H6z" fill="#2a3442" stroke="#fff"/><path d="M7 14h7" stroke="#fff" stroke-width="2"/>
            <path d="M2 1v3M4 1v3M1 4h4v2H1zM3 6v8h3" fill="none" stroke="#fff"/>
          </svg>
        </button>
        <button aria-label="Volume">
          <svg width="16" height="16" viewBox="0 0 16 16">
            <path d="M1 5h2l4-4v14l-4-4H1z" fill="#fff"/><path d="M9 5q2 3 0 6M11 3q3 5 0 10M13 2q4 6 0 12" fill="none" stroke="#b5bbc2"/>
          </svg>
        </button>
      </div>
      <div class="clock"><div class="time"></div><div class="date"></div></div>
      <button class="desktop" aria-label="Afficher le Bureau"></button>
    `
  }

  connectedCallback() {
    for (const name of ['lang', 'time', 'date']) {
      this.shadowRoot.querySelector('.' + name).textContent = this.getAttribute(name)
    }
  }
}

customElements.define('title-bar', TitleBar)
customElements.define('browser-tab', BrowserTab)
customElements.define('window-controls', WindowControls)
customElements.define('tool-bar', ToolBar)
customElements.define('error-page', ErrorPage)
customElements.define('task-bar', TaskBar)
customElements.define('task-button', TaskButton)
customElements.define('system-tray', SystemTray)
</script>
</body>
</html>
